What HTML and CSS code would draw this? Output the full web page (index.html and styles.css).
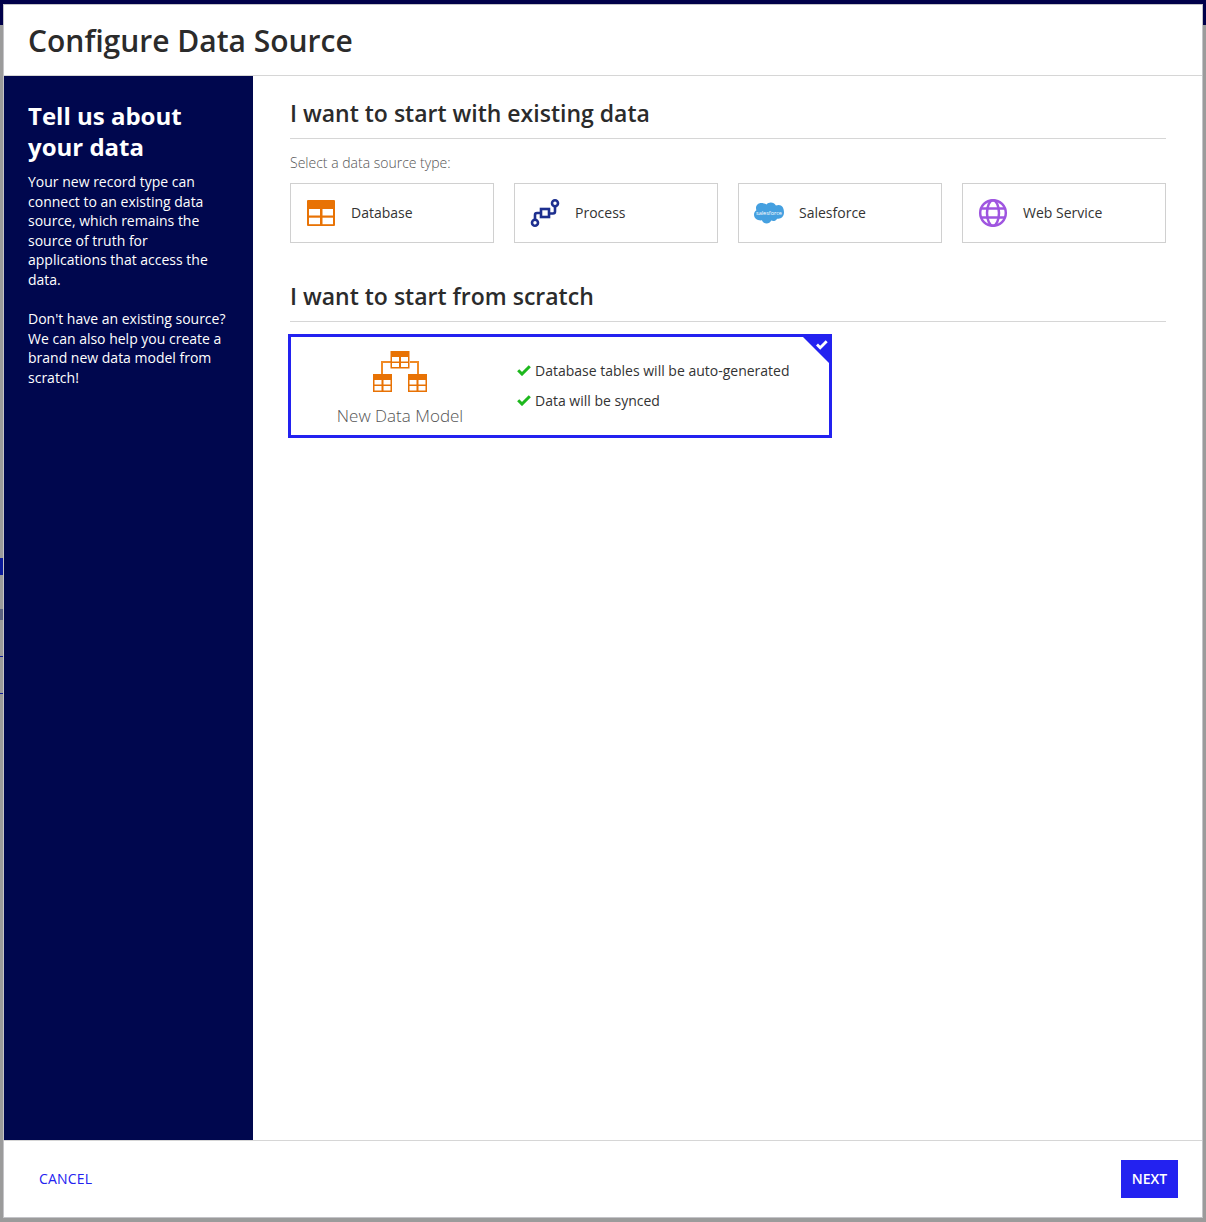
FILE: index.html
```html
<!DOCTYPE html>
<html lang="en">
<head>
	<meta charset="UTF-8">
	<title>Configure Data Source</title>
	<link rel="stylesheet" href="styles.css">
</head>
<body>
	<div class="topbar"></div>
	<div class="peek peek-a"></div>
	<div class="peek peek-b"></div>
	<div class="peek peek-c"></div>
	<div class="peek peek-d"></div>
	<section class="dialog">
		<header class="dialog-head">
			<h1>Configure Data Source</h1>
		</header>
		<div class="dialog-body">
			<aside class="side">
				<h2>Tell us about your data</h2>
				<p>Your new record type can connect to an existing data source, which remains the source of truth for applications that access the data.</p>
				<p>Don't have an existing source? We can also help you create a brand new data model from scratch!</p>
			</aside>
			<main class="content">
				<h3>I want to start with existing data</h3>
				<div class="hint">Select a data source type:</div>
				<div class="types">
					<div class="type">
						<svg class="type-icon" width="30" height="30" viewBox="0 0 30 30">
							<rect x="1" y="2" width="28" height="26" rx="1" fill="#e87204"/>
							<rect x="3" y="11" width="11" height="6.500" fill="#fff"/>
							<rect x="16.500" y="11" width="10.500" height="6.500" fill="#fff"/>
							<rect x="3" y="19.700" width="11" height="6.500" fill="#fff"/>
							<rect x="16.500" y="19.700" width="10.500" height="6.500" fill="#fff"/>
						</svg>
						<span>Database</span>
					</div>
					<div class="type">
						<svg class="type-icon" width="30" height="30" viewBox="0 0 30 30" fill="none" stroke="#1d2f8f" stroke-width="2.600">
							<circle cx="5" cy="24.700" r="3"/>
							<path d="M5 21.500v-4.500a2 2 0 0 1 2-2h4"/>
							<rect x="11" y="11" width="8" height="8"/>
							<path d="M19 15.500h4a2 2 0 0 0 2-2V8.500"/>
							<circle cx="25" cy="5.300" r="3"/>
						</svg>
						<span>Process</span>
					</div>
					<div class="type">
						<svg class="type-icon" width="30" height="30" viewBox="0 0 30 30">
							<path fill="#45a0e0" d="M12.500 6.500c1.100-1.200 2.600-1.900 4.300-1.900 2.200 0 4.100 1.200 5.100 3 .9-.4 1.800-.6 2.800-.6 3.400 0 5.300 3 5.300 7.800 0 3-2.500 6-5.700 6-.4 0-.8 0-1.200-.1-.8 1.400-2.200 2.300-3.900 2.300-.7 0-1.400-.2-2-.5-.8 1.800-2.600 3-4.600 3-2.100 0-3.900-1.300-4.700-3.200-.3.100-.7.100-1 .1C2.800 22.400 0 20 0 16.500c0-1.800 1-3.400 2.400-4.200-.3-.7-.4-1.400-.4-2.200C2 7.300 4.300 5 7.100 5c1.700 0 3.300.4 5.400 1.500z"/>
							<text class="sf-mark" x="15" y="16.500" text-anchor="middle">salesforce</text>
						</svg>
						<span>Salesforce</span>
					</div>
					<div class="type">
						<svg class="type-icon" width="30" height="30" viewBox="0 0 30 30" fill="none" stroke="#9f55e0" stroke-width="2.500">
							<circle cx="15" cy="15" r="12.800"/>
							<ellipse cx="15" cy="15" rx="6" ry="12.800"/>
							<path d="M3.500 10.500h23M3.500 19.500h23"/>
						</svg>
						<span>Web Service</span>
					</div>
				</div>
				<h3 class="second">I want to start from scratch</h3>
				<div class="model">
					<div class="model-left">
						<svg width="56" height="42" viewBox="0 0 56 42">
							<path d="M19 11H10v12M38 11h8v12" fill="none" stroke="#f08a24" stroke-width="2"/>
							<g fill="#e87204" fill-rule="evenodd">
								<path d="M18.500 0h19v17.500h-19zM20 6v4.500h7V6zM29 6v4.500h7V6zM20 12v4h7v-4zM29 12v4h7v-4z"/>
								<path d="M1 23h19v18H1zM2.500 29v4.500h7V29zM11.500 29v4.500h7V29zM2.500 35v4.500h7V35zM11.500 35v4.500h7V35z"/>
								<path d="M36 23h19v18H36zM37.500 29v4.500h7V29zM46.500 29v4.500h7V29zM37.500 35v4.500h7V35zM46.500 35v4.500h7V35z"/>
							</g>
						</svg>
						<div class="model-name">New Data Model</div>
					</div>
					<ul class="model-list">
						<li><svg width="14" height="11" viewBox="0 0 14 11"><path d="M1.200 5.200l3.800 3.800 7.800-7.800" fill="none" stroke="#1db81d" stroke-width="3"/></svg>Database tables will be auto-generated</li>
						<li><svg width="14" height="11" viewBox="0 0 14 11"><path d="M1.200 5.200l3.800 3.800 7.800-7.800" fill="none" stroke="#1db81d" stroke-width="3"/></svg>Data will be synced</li>
					</ul>
					<svg class="corner" width="26" height="26" viewBox="0 0 26 26">
						<path d="M0 0h26v26z" fill="#2322f0"/>
						<path d="M14 7.500l3.200 3.200 6.500-6.500" fill="none" stroke="#fff" stroke-width="2.800"/>
					</svg>
				</div>
			</main>
		</div>
		<footer class="dialog-foot">
			<a class="cancel">CANCEL</a>
			<button class="next">NEXT</button>
		</footer>
	</section>
</body>
</html>
```

FILE: styles.css
```css
html, body {
	margin: 0;
	height: 100%;
}
body {
	position: relative;
	overflow: hidden;
	background: #9b9b9b;
	font-family: "Open Sans", "Liberation Sans", sans-serif;
	color: #222;
	padding: 5px 4px;
	box-sizing: border-box;
}
.topbar {
	position: absolute;
	left: 0;
	top: 0;
	width: 100%;
	height: 25px;
	background: #00004a;
}
/* bits of the page behind the dialog, showing down the left edge */
.peek {
	position: absolute;
	left: 0;
	width: 3px;
	height: 1px;
	background: #0b1a9a;
}
.peek-a {
	top: 558px;
	height: 17px;
}
.peek-b {
	top: 609px;
	height: 11px;
	background: #5b6280;
}
.peek-c {
	top: 656px;
}
.peek-d {
	top: 693px;
}
.dialog {
	position: relative;
	height: 1212px;
	display: flex;
	flex-direction: column;
	background: #fff;
	box-shadow: 0 0 0 1px #c4c4c8;
}
.dialog-head {
	height: 71px;
	box-sizing: border-box;
	border-bottom: 1px solid #d6d6d6;
	padding-left: 24px;
}
.dialog-head h1 {
	margin: 0;
	font-size: 30px;
	font-weight: 600;
	line-height: 71px;
	color: #2b2b2b;
}
.dialog-body {
	flex: 1;
	display: flex;
	min-height: 0;
}
.side {
	width: 249px;
	box-sizing: border-box;
	padding: 24px 24px 0;
	background: #00074e;
	color: #fff;
	font-size: 14px;
	line-height: 19.600px;
}
.side h2 {
	margin: 0 0 10px;
	font-size: 24px;
	line-height: 31px;
	font-weight: 700;
}
.side p {
	margin: 0 0 19.600px;
}
.content {
	flex: 1;
	padding: 20px 36px 0 37px;
}
.content h3 {
	margin: 0;
	padding-bottom: 8px;
	border-bottom: 1px solid #d6d6d6;
	font-size: 23px;
	line-height: 34px;
	font-weight: 600;
	color: #2b2b2b;
}
.content h3.second {
	margin-top: 36px;
}
.hint {
	margin-top: 14px;
	font-size: 14px;
	line-height: 19px;
	font-weight: 300;
	color: #555;
}
.types {
	display: grid;
	grid-template-columns: repeat(4, 204px);
	gap: 20px;
	margin-top: 11px;
}
.type {
	display: flex;
	align-items: center;
	height: 60px;
	box-sizing: border-box;
	padding-left: 15px;
	border: 1px solid #d0d0d0;
	font-size: 14px;
	color: #333;
}
.type span {
	margin-bottom: 2px;
}
.type-icon {
	margin-right: 15px;
}
.sf-mark {
	font-size: 5.500px;
	fill: #fff;
}
.model {
	position: relative;
	display: flex;
	width: 544px;
	height: 104px;
	box-sizing: border-box;
	margin: 12px 0 0 -2px;
	border: 3px solid #2322f0;
}
.model-left {
	width: 218px;
	display: flex;
	flex-direction: column;
	align-items: center;
	padding-top: 14px;
}
.model-name {
	margin-top: 12px;
	font-size: 17px;
	line-height: 22px;
	font-weight: 300;
	color: #555;
}
.model-list {
	list-style: none;
	margin: 0;
	padding: 18px 0 0 8px;
	font-size: 14px;
	color: #333;
}
.model-list li {
	display: flex;
	align-items: center;
	height: 30px;
}
.model-list svg {
	margin-right: 4px;
}
.corner {
	position: absolute;
	right: 0;
	top: 0;
}
.dialog-foot {
	height: 77px;
	box-sizing: border-box;
	display: flex;
	align-items: center;
	justify-content: space-between;
	padding: 0 24px 0 35px;
	border-top: 1px solid #d6d6d6;
}
.cancel {
	margin-bottom: 2px;
	font-size: 14px;
	letter-spacing: .2px;
	color: #2322f0;
}
.next {
	width: 57px;
	height: 38px;
	border: 0;
	padding: 0 0 2px;
	background: #2322f0;
	color: #fff;
	font-family: inherit;
	font-size: 14px;
	font-weight: 600;
}
```
